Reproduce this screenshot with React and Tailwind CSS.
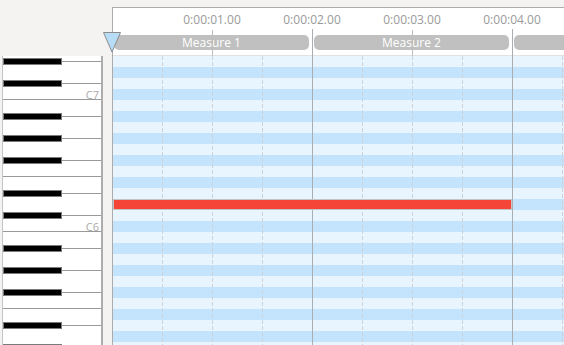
import React from "react";

const NOTES = ["C", "C#", "D", "D#", "E", "F", "F#", "G", "G#", "A", "A#", "B"];

// top row is D#7, each row one semitone down
const rows = Array.from({ length: 27 }, (_, i) => {
  const midi = 99 - i; // D#7
  const name = NOTES[midi % 12];
  const octave = Math.floor(midi / 12) - 1;
  return { name, octave, black: name.includes("#") };
});

function PianoRow({ row }) {
  return (
    <div
      className={
        "relative h-[11px] shrink-0 " +
        (row.name === "C" || row.name === "F" ? "border-b border-[#9a9a9a]" : "")
      }
    >
      {row.black && (
        <>
          <div className="absolute left-0 top-[2px] h-[7px] w-[59px] border border-[#7a7a7a] bg-black" />
          <div className="absolute left-[59px] right-0 top-[5px] h-px bg-[#9a9a9a]" />
        </>
      )}
      {row.name === "C" && (
        <div className="absolute right-[2px] top-0 text-[11px] leading-[11px] text-[#aaaaaa]">
          C{row.octave}
        </div>
      )}
    </div>
  );
}

function GridLines() {
  const lines = [];
  for (let i = 1; i < 10; i++) {
    const x = i * 50 - 0.5;
    if (i % 4 === 0) {
      lines.push(<line key={i} x1={x} x2={x} y1={21} y2={340} stroke="#a9aeb3" strokeWidth="1" />);
    } else {
      if (i % 2 === 0) {
        lines.push(<line key={"t" + i} x1={x} x2={x} y1={22} y2={48} stroke="#bdbdbd" strokeWidth="1" />);
      }
      lines.push(
        <line key={i} x1={x} x2={x} y1={48} y2={340} stroke="#cdd2d6" strokeWidth="1" strokeDasharray="4 2" />
      );
    }
  }
  return (
    <svg className="pointer-events-none absolute left-0 top-0" width="452" height="340">
      {lines}
    </svg>
  );
}

export default function App() {
  return (
    <div
      className="relative flex h-[345px] w-[564px] overflow-hidden bg-[#f4f3f1]"
      style={{ fontFamily: '"Open Sans", "Noto Sans", sans-serif' }}
    >
      {/* keyboard */}
      <div className="w-[112px] shrink-0 pt-[56px]">
        <div className="ml-[2px] flex w-[101px] flex-col border-l border-r-2 border-l-[#c4c4c4] border-r-[#acacac] bg-white">
          {rows.map((r, i) => (
            <PianoRow key={i} row={r} />
          ))}
        </div>
      </div>

      {/* roll */}
      <div className="min-w-0 flex-1 pt-[7px]">
        <div className="relative h-full overflow-hidden border-l border-t border-[#acacac] bg-white">
          <div className="h-[48px] border-b border-[#e2e2e2]">
            <div className="flex pl-[49px] pt-[5px] text-[12px] leading-[14px] text-[#9a9a9a]">
              {["0:00:01.00", "0:00:02.00", "0:00:03.00", "0:00:04.00"].map((t) => (
                <div key={t} className="w-[100px] shrink-0 text-center">
                  {t}
                </div>
              ))}
            </div>
            <div className="ml-px mt-[8px] flex gap-[5px]">
              {["Measure 1", "Measure 2", "Measure 3"].map((m) => (
                <div
                  key={m}
                  className="h-[15px] w-[195px] shrink-0 rounded-[5px] bg-[#c0c0c0] text-center text-[12px] leading-[15px] text-white"
                >
                  {m}
                </div>
              ))}
            </div>
          </div>

          <div className="relative flex flex-col">
            {rows.map((r, i) => (
              <div key={i} className={"h-[11px] shrink-0 " + (i % 2 === 0 ? "bg-[#e8f4fe]" : "bg-[#c3e4fc]")} />
            ))}
            <div className="absolute left-0 top-[143px] z-10 h-[11px] w-[399px] border border-[#c4c4c4] bg-[#f44538]" />
          </div>

          <GridLines />
        </div>
      </div>

      {/* playhead */}
      <svg className="absolute left-[103px] top-[32px]" width="18" height="21" viewBox="0 0 18 21">
        <polygon points="0.5,0.5 17.5,0.5 9,20" fill="#b7dcf6" stroke="#8c8c8c" strokeWidth="1" />
      </svg>
    </div>
  );
}
